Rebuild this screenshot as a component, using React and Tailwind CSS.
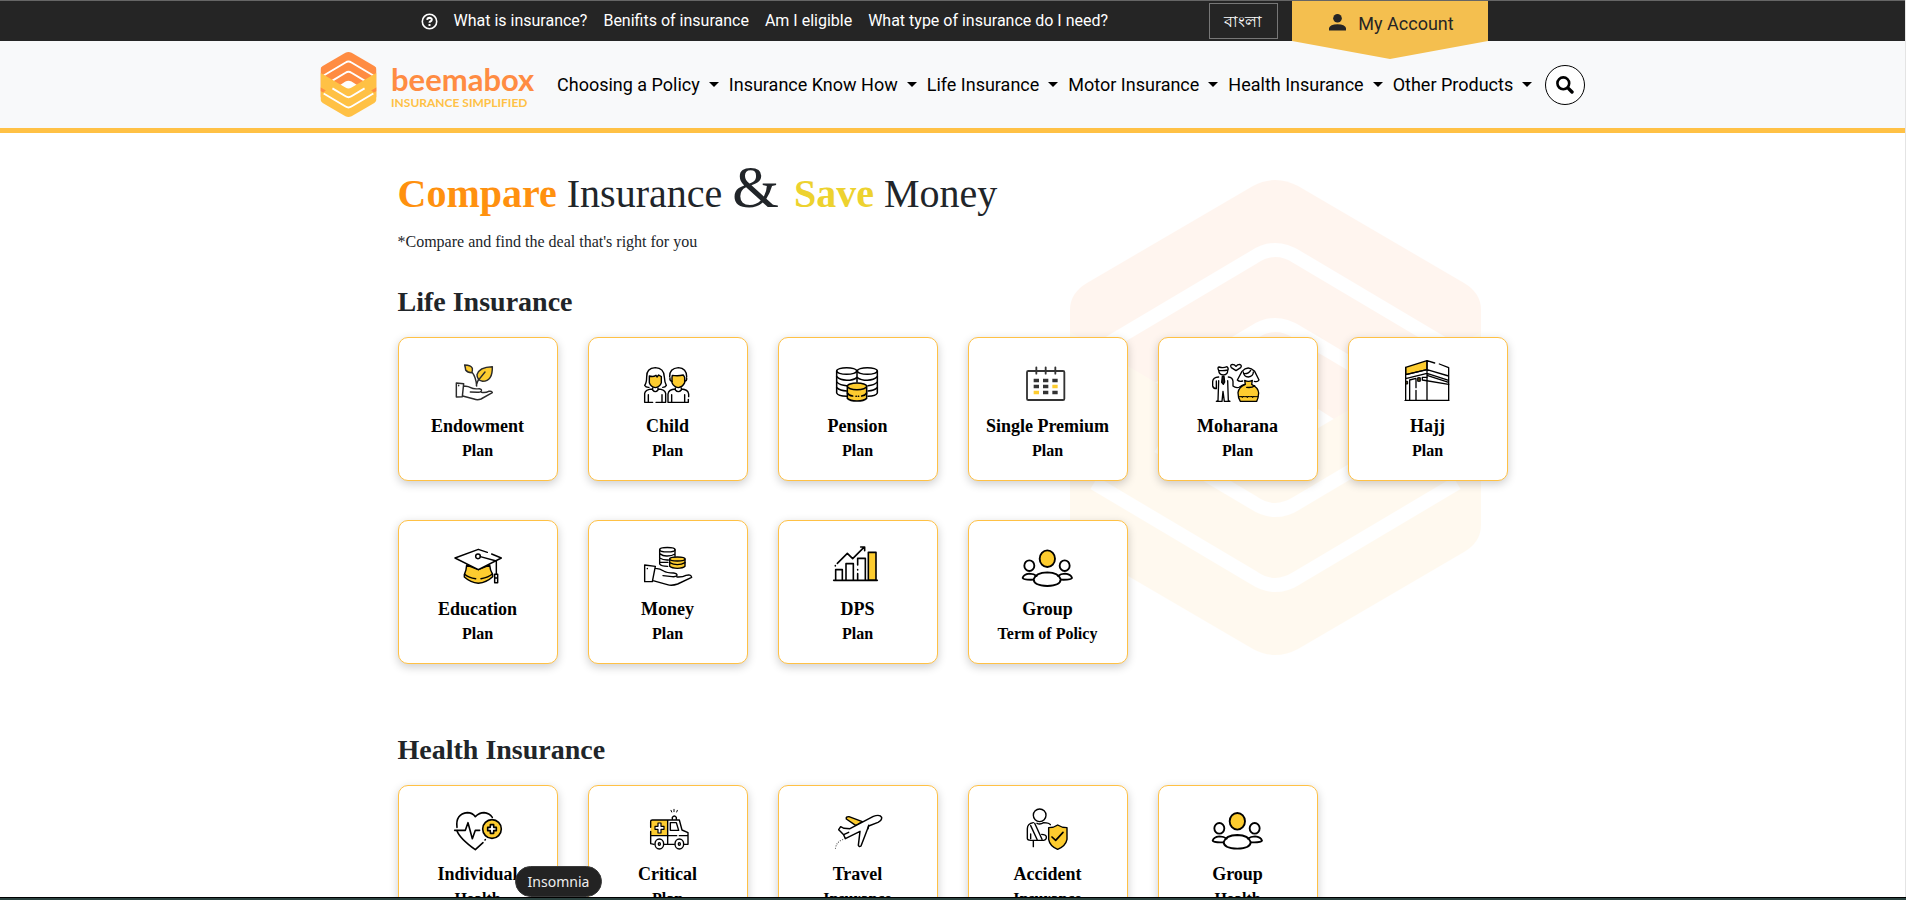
import React from "react";

const GOLD = "#fdcc2f";

function BoxMark({ className, id }) {
  return (
    <svg className={className} viewBox="0 0 411 475" aria-hidden="true">
      <defs>
        <clipPath id={id}>
          <path d="M0 130Q0 113 17 103L183 6Q205 -6 228 6L394 103Q411 113 411 130V345Q411 362 394 372L228 469Q205 481 183 469L17 372Q0 362 0 345Z" />
        </clipPath>
      </defs>
      <g clipPath={`url(#${id})`}>
        <path fill="#ff8c42" d="M0 0H411V330H0Z" />
        <path fill="none" stroke="#fff" strokeWidth="14" d="M24 172L184 77Q205 63 227 77L387 172" />
        <path fill="none" stroke="#fff" strokeWidth="14" d="M88 209L184 152Q205 138 227 152L323 209" />
        <path fill="#fff" d="M130 250L183 216Q205 204 228 216L281 250L205 290Z" />
        <path fill="#ffc145" d="M0 152L183 260Q205 273 228 260L411 152V475H0Z" />
        <path fill="#ff8c42" d="M0 258L40 282L20 296L0 285ZM411 258L371 282L391 296L411 285Z" />
        <path fill="none" stroke="#fff" strokeWidth="14" d="M24 303L184 398Q205 412 227 398L387 303" />
        <path fill="none" stroke="#fff" strokeWidth="14" d="M88 266L184 323Q205 337 227 323L323 266" />
      </g>
    </svg>
  );
}

function Icon({ box, children, width = 4.6 }) {
  return (
    <svg
      className="h-[50px] w-[60px]"
      viewBox={box}
      fill="none"
      stroke="#000"
      strokeWidth={width}
      strokeLinecap="round"
      strokeLinejoin="round"
      aria-hidden="true"
    >
      {children}
    </svg>
  );
}

const Endowment = () => (
  <Icon box="204 111 180 150" width={4.4}>
    <g stroke="#2b2b2b">
      <path d="M229 189L251 191L247 230L229 231ZM236 196V197" />
      <path d="M253 199Q262 197 272 203Q280 208 298 206Q306 208 304 213Q302 217 292 217L271 216M304 217Q318 219 326 214Q336 212 337 218L303 237Q292 241 282 237L248 228M251 197L253 199" />
      <path d="M290 198Q288 172 277 158M289 196Q294 174 316 155" />
      <path fill={GOLD} d="M254 135Q273 135 277 145Q278 154 275 158Q262 158 257 150Q256 142 254 135Z" />
      <path fill={GOLD} d="M337 140Q338 184 308 184Q291 180 291 164Q297 141 337 140Z" />
      <path d="M299 176L315 156" />
    </g>
  </Icon>
);

const Child = () => (
  <Icon box="774 111 180 150" width={4.2}>
    <path fill={GOLD} stroke="none" d="M808 168Q830 174 834 166L844 171V188Q838 201 826 203Q812 200 808 188Z" />
    <path d="M808 168V188Q812 200 826 203Q840 200 844 188V170L836 165L831 171L828 166Q820 172 808 168" />
    <path d="M800 171Q799 144 826 143Q852 144 853 171Q854 188 859 196Q856 202 848 202M800 171Q800 188 794 196Q798 203 807 202" />
    <path d="M818 204V210Q826 220 834 210V204M818 207Q796 208 794 220V247H818M834 207Q855 208 857 220V247H828M805 224V246M846 224V246" />
    <path fill={GOLD} d="M877 166Q894 169 910 165L914 172V188Q908 201 895 203Q881 200 876 188V172Z" />
    <path d="M869 170Q868 145 895 143Q920 145 920 170M870 174Q868 182 876 184M920 174Q921 182 914 184" />
    <path d="M886 204V210Q895 220 904 210V204M886 207Q866 208 864 222V247H925V238M904 207Q924 208 926 222V230M875 224V246M914 224V246" />
  </Icon>
);

const Pension = () => (
  <Icon box="204 111 180 150">
    <ellipse cx="260" cy="153" rx="30" ry="10" />
    <ellipse cx="322" cy="153" rx="30" ry="10" />
    <path d="M230 153V219Q234 228 260 229M352 153V219Q348 228 324 229M291 153V186" />
    <path d="M230 170Q240 180 260 181Q280 181 291 172Q303 181 322 181Q342 180 352 170M230 186Q240 196 260 197H264M352 186Q342 196 324 197M230 203Q240 212 260 213M352 203Q342 212 324 213" />
    <path fill={GOLD} d="M262 199V235Q270 243 291 243Q312 243 320 235V199Z" />
    <ellipse fill={GOLD} cx="291" cy="199" rx="29" ry="10" />
    <path d="M262 219Q266 226 278 228M288 229H289M295 229H296M305 228Q316 226 320 219" />
  </Icon>
);

const Premium = () => (
  <Icon box="774 111 180 150" width={5.5}>
    <rect x="801" y="153" width="112" height="87" rx="4" stroke="#333" />
    <path stroke="#333" d="M829 142V161M857 142V161M886 142V161" />
    <g stroke="none" fill="#333">
      <path d="M821 176h16v11h-16zM849 176h16v11h-16zM877 176h16v11h-16zM821 194h16v11h-16zM849 194h16v11h-16zM849 212h16v11h-16zM877 212h16v11h-16z" />
      <path fill={GOLD} d="M877 194h16v11h-16zM821 212h16v11h-16z" />
    </g>
  </Icon>
);

const Moharana = () => (
  <Icon box="234 111 180 150" width={4}>
    <path d="M266 151Q261 141 268 141Q279 145 291 140Q297 145 293 152Q293 164 280 165Q267 164 266 151Q280 153 293 150" />
    <path d="M318 152L304 143Q299 135 307 133Q314 133 318 139Q322 133 329 133Q337 136 332 143Z" />
    <path d="M266 171Q249 172 248 184V198Q250 206 259 206V183M266 182L264 242L259 244H276L279 214M295 171Q308 172 309 184V198Q318 206 330 201M293 182L295 242L300 244H283L279 214" />
    <path fill="#222" d="M277 169H282L284 186L280 193L275 187Z" />
    <path d="M336 154Q354 134 374 154L387 180Q383 187 373 184M336 154L322 180Q328 186 338 183" />
    <path d="M340 156Q341 170 355 171Q370 169 370 156M342 161Q356 162 362 151" />
    <path fill={GOLD} d="M344 181Q355 187 367 181L365 193Q385 203 386 219Q385 235 380 244H331Q324 234 324 218Q326 201 346 193Z" />
    <path strokeWidth="3" d="M327 230H384M333 229L337 233L341 229M348 229L352 233L356 229M364 229L368 233L372 229" />
    <path d="M350 202Q366 204 374 197M330 200Q336 195 344 193" />
  </Icon>
);

const Hajj = () => (
  <Icon box="804 111 180 150" width={4}>
    <path fill={GOLD} d="M827 142L891 122V149L827 164Z" />
    <path d="M827 142V241M891 122V241M956 144V241M825 241H957M891 122L914 129M928 132L956 143M827 164L891 149L956 168M827 176L891 160L956 181M891 166L956 187" />
    <path d="M839 180V241M858 177V203M858 211V241M839 180L858 175" />
    <path d="M877 180L956 193M891 172L877 172V180" />
    <path fill="#4a3a10" strokeWidth="3" d="M828 184H833V192H828ZM864 173H871V184H864Z" />
  </Icon>
);

const Education = () => (
  <Icon box="204 105 180 150" width={4.4}>
    <path fill={GOLD} d="M260 180Q259 197 253 209V216Q272 233 295 235Q320 232 338 215V208Q330 195 329 180L295 194Z" />
    <path d="M254 208Q266 219 287 221M303 221Q326 217 337 207" />
    <path fill="#fff" stroke="none" d="M295 133L225 159L295 194L364 159Z" />
    <path d="M322 142L295 133L225 159L295 194L364 159L335 147" />
    <circle cx="294" cy="154" r="7" fill="#fff" />
    <path d="M301 155L349 168V206M344 208H353V233H344ZM344 219H353" />
  </Icon>
);

const Money = () => (
  <Icon box="774 105 180 150" width={4.2}>
    <ellipse cx="862" cy="134" rx="23" ry="6.5" />
    <path d="M839 134V177Q843 184 863 184M885 134V154M839 146Q850 154 862 153Q876 153 885 147M839 159Q850 166 865 165M839 172H864" />
    <path fill={GOLD} d="M869 162V184Q876 190 892 190Q909 190 915 184V162Z" />
    <ellipse fill={GOLD} cx="892" cy="162" rx="23" ry="6" />
    <path d="M869 173Q880 179 892 179Q905 179 915 173" />
    <path d="M794 180L826 184L817 230H794ZM802 190V191M827 190Q840 190 851 198Q860 204 881 204Q892 206 891 211Q889 216 876 215L849 212M891 216Q908 217 918 211Q933 207 935 217L893 237Q876 243 862 239L819 227" />
  </Icon>
);

const Dps = () => (
  <Icon box="204 105 180 150" width={4.8}>
    <path d="M221 226H352M227 225V194H247V225M258 225V176H280V225M293 180V160H316V225M293 194V195M293 206V225" />
    <path fill={GOLD} d="M325 142H348V225H325Z" />
    <path d="M226 183V182M232 175L262 145L278 161L311 128M302 126H314V137" />
  </Icon>
);

const people = (
  <>
    <ellipse fill={GOLD} cx="862" cy="161" rx="23" ry="25" />
    <ellipse cx="808" cy="182" rx="15" ry="16" />
    <ellipse cx="914" cy="182" rx="15" ry="16" />
    <path d="M821 223Q827 203 862 202Q896 203 902 223Q902 242 862 243Q821 242 821 223Z" />
    <path d="M830 213Q822 206 808 206Q790 208 788 219Q790 225 820 224M894 213Q902 206 915 206Q933 208 936 219Q934 225 903 224" />
  </>
);

const Group = () => (
  <Icon box="774 105 180 150" width={5.6}>
    {people}
  </Icon>
);

const GroupHealth = () => (
  <Icon box="774 112 180 150" width={5.6}>
    {people}
  </Icon>
);

const Individual = () => (
  <Icon box="204 255 180 150" width={4.8}>
    <path d="M231 322Q226 282 262 278Q277 278 286 290Q298 278 312 278Q328 279 337 292M231 332Q238 354 286 389L309 368M315 360L316 359" />
    <path d="M224 331H256L264 308L277 356L286 331H299" />
    <circle cx="336" cy="327" r="28" fill={GOLD} />
    <path fill="#fff" d="M331 314H341V322H349V332H341V340H331V332H323V322H331Z" />
  </Icon>
);

const Critical = () => (
  <Icon box="774 255 180 150" width={4.2}>
    <path fill={GOLD} stroke="none" d="M812 300H863V347H812Z" />
    <path d="M812 322V304Q812 300 817 300H898L906 330L924 338V373H911M812 334V371L822 373M853 373H883M863 301V372M812 347H890M898 347H924" />
    <path fill="#fff" strokeWidth="3.6" d="M834 309H843V319H852V328H843V339H834V328H825V319H834Z" />
    <path d="M871 308H889L896 331H871ZM877 298V292Q883 284 889 292V298" />
    <path strokeWidth="3" d="M882 268V275M873 271L875 276M892 271L890 276" />
    <ellipse cx="838" cy="372" rx="13" ry="15" fill="#fff" />
    <ellipse cx="838" cy="372" rx="3" ry="4" />
    <ellipse cx="898" cy="372" rx="13" ry="15" fill="#fff" />
    <ellipse cx="898" cy="372" rx="3" ry="4" />
  </Icon>
);

const Travel = () => (
  <Icon box="204 135 180 150" width={4.4}>
    <path fill={GOLD} d="M288 197L259 177Q257 169 267 170L307 185Z" />
    <path fill="#fff" d="M270 206L252 205L242 200L236 209L240 213L251 224L256 236L300 214L295 256Q297 262 303 258L326 198L354 187Q366 181 365 172Q360 162 340 169Z" />
    <path d="M251 224L266 217M326 196L324 206" />
    <path stroke="#333" strokeWidth="3.2" strokeDasharray="0.1 7" d="M248 239Q226 246 226 272" />
  </Icon>
);

const Accident = () => (
  <Icon box="774 135 180 150" width={4.2}>
    <circle cx="839" cy="166" r="19" />
    <path d="M820 188Q802 191 802 206V236Q803 241 812 241H851Q860 240 859 230Q857 223 845 223M831 190Q840 195 851 188Q868 189 871 194M812 197L832 240M824 190L846 238M812 222V236M820 243V260" />
    <path fill={GOLD} d="M893 195Q905 203 921 203V238Q917 258 893 268Q869 258 866 238V203Q882 203 893 195Z" />
    <path strokeWidth="5" d="M876 231L887 241L909 217" />
  </Icon>
);

const life = [
  ["Endowment", "Plan", Endowment],
  ["Child", "Plan", Child],
  ["Pension", "Plan", Pension],
  ["Single Premium", "Plan", Premium],
  ["Moharana", "Plan", Moharana],
  ["Hajj", "Plan", Hajj],
  ["Education", "Plan", Education],
  ["Money", "Plan", Money],
  ["DPS", "Plan", Dps],
  ["Group", "Term of Policy", Group],
];

const health = [
  ["Individual", "Health", Individual],
  ["Critical", "Plan", Critical],
  ["Travel", "Insurance", Travel],
  ["Accident", "Insurance", Accident],
  ["Group", "Health", GroupHealth],
];

const menus = [
  "Choosing a Policy",
  "Insurance Know How",
  "Life Insurance",
  "Motor Insurance",
  "Health Insurance",
  "Other Products",
];

function Plans({ title, items }) {
  return (
    <section>
      <h2 className="mb-[18px] text-[28px] leading-[34px] font-bold text-[#212529]">{title}</h2>
      <ul className="grid grid-cols-2 gap-x-[30px] gap-y-[39px] sm:grid-cols-3 lg:grid-cols-6">
        {items.map(([name, kind, Art]) => (
          <li key={name}>
            <a
              href="#"
              className="flex min-h-[144px] flex-col items-center rounded-[10px] border border-[#ffc145] bg-white pt-[19px] text-center font-bold text-black shadow-[0_3px_10px_rgba(0,0,0,0.2)]"
            >
              <Art />
              <span className="mt-1.5 text-lg leading-[26px]">{name}</span>
              <span className="text-base leading-6">{kind}</span>
            </a>
          </li>
        ))}
      </ul>
    </section>
  );
}

export default function App() {
  return (
    <div className="relative flex h-screen flex-col overflow-hidden bg-white font-['Liberation_Serif',serif] text-[#212529]">
      <div className="min-h-0 flex-1 overflow-hidden border-r border-[#e4e4e4]">
        <div className="border-t border-[#666] bg-[#252525] font-['Roboto',sans-serif] text-white">
          <div className="mx-auto flex h-10 max-w-[1070px] items-center pl-[3px]">
            <svg className="size-[17px]" viewBox="0 0 17 17" fill="none" stroke="#fff" strokeWidth="1.6" aria-hidden="true">
              <circle cx="8.5" cy="8.5" r="7.2" />
              <path strokeWidth="2" d="M6.2 6.9Q6.4 4.9 8.5 4.8Q10.8 5 10.8 6.8Q10.6 8 9.3 8.5Q8.5 8.9 8.5 9.8M8.5 11V12.9" />
            </svg>
            <nav className="ml-4 flex gap-4 text-base leading-6 whitespace-nowrap">
              <a href="#">What is insurance?</a>
              <a href="#">Benifits of insurance</a>
              <a href="#">Am I eligible</a>
              <a href="#">What type of insurance do I need?</a>
            </nav>
            <button
              type="button"
              className="ml-auto h-9 w-[69px] border border-[#777] font-['Noto_Sans',sans-serif] text-base leading-6"
            >
              বাংলা
            </button>
            <a href="#" className="relative ml-3.5 flex h-10 w-[196px] items-start justify-center gap-3 pl-1 text-lg leading-6 text-[#252525]">
              <svg className="absolute top-0 left-0 h-[58px] w-full" viewBox="0 0 196 58" preserveAspectRatio="none" aria-hidden="true">
                <path fill="#f4bf4f" d="M0 0H196V40L98 58L0 40Z" />
              </svg>
              <svg className="relative mt-[13px] size-[17px]" viewBox="0 0 17 17" fill="#252525" aria-hidden="true">
                <ellipse cx="8.5" cy="4.3" rx="4.3" ry="4.3" />
                <path d="M0 16.5V14Q1 10.5 8.5 10.2Q16 10.5 17 14V16.5Z" />
              </svg>
              <span className="relative mt-[11px]">My Account</span>
            </a>
          </div>
        </div>

        <header className="border-b-5 border-[#ffc145] bg-[#f8f9fa] font-['Roboto',sans-serif]">
          <div className="mx-auto flex h-[87px] max-w-[1265px] items-center">
            <a href="#" className="flex items-center gap-3.5">
              <BoxMark id="logo-clip" className="h-[65px] w-[57px]" />
              <span className="flex w-[146px] flex-col font-['Lato',sans-serif] font-bold whitespace-nowrap">
                <span className="text-[31px] leading-9 text-[#ff8c42]">beemabox</span>
                <span className="text-xs leading-3 text-[#ffc145]">INSURANCE SIMPLIFIED</span>
              </span>
            </a>
            <nav className="ml-5 flex gap-2.5">
              {menus.map((m) => (
                <button key={m} type="button" className="flex items-center gap-[9px] text-lg leading-6 whitespace-nowrap text-black">
                  {m}
                  <svg className="h-[5px] w-2.5" viewBox="0 0 10 5" aria-hidden="true">
                    <path d="M0 0H10L5 5Z" />
                  </svg>
                </button>
              ))}
            </nav>
            <button
              type="button"
              aria-label="Search"
              className="ml-auto flex size-10 items-center justify-center rounded-full border border-black bg-white"
            >
              <svg className="size-[18px]" viewBox="0 0 18 18" fill="none" stroke="#000" aria-hidden="true">
                <circle cx="7.3" cy="7.3" r="5.9" strokeWidth="2.6" />
                <path strokeWidth="3.4" strokeLinecap="round" d="M12.4 12.4L16 16" />
              </svg>
            </button>
          </div>
        </header>

        <main className="relative mx-auto max-w-[1110px] pt-[18px]">
          <BoxMark id="backdrop-clip" className="absolute top-[47px] right-[27px] h-[475px] w-[411px] opacity-8" />
          <div className="relative">
            <h1 className="text-[40px] leading-[72px]">
              <b className="text-[#ff910f]">Compare</b> Insurance <span className="text-[60px]">{"& "}</span>
              <b className="text-[#edd22f]">Save</b> Money
            </h1>
            <p className="text-base leading-6">*Compare and find the deal that's right for you</p>
            <div className="mt-[31px] flex flex-col gap-[69px]">
              <Plans title="Life Insurance" items={life} />
              <Plans title="Health Insurance" items={health} />
            </div>
          </div>
        </main>
      </div>

      <div className="h-[3px] shrink-0 border-t border-black bg-[#2b423f]" />
      <div
        role="tooltip"
        className="absolute bottom-[3px] left-[27%] flex h-[31px] items-center rounded-full border border-[#3a3a3a] bg-[#232323] px-3 font-['Noto_Sans',sans-serif] text-sm leading-5 text-[#eee]"
      >
        Insomnia
      </div>
    </div>
  );
}
